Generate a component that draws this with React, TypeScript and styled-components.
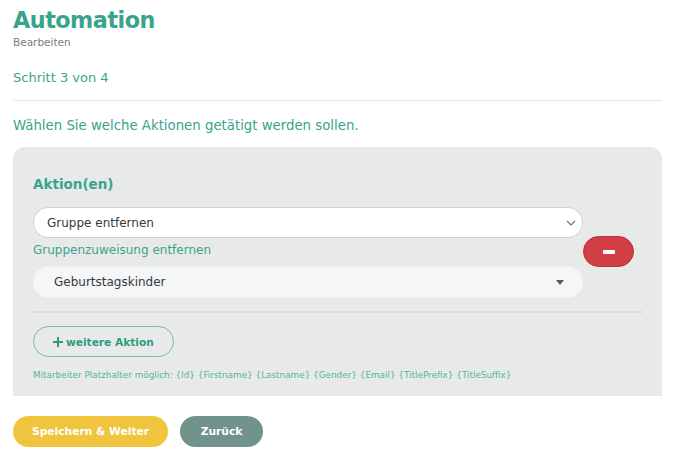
import React from 'react';
import styled, { createGlobalStyle } from 'styled-components';

const GlobalStyle = createGlobalStyle`
  html, body {
    margin: 0;
    padding: 0;
    background: #ffffff;
    font-family: 'DejaVu Sans', 'Open Sans', sans-serif;
  }
  * { box-sizing: border-box; }
`;

const Page = styled.div`
  padding: 5px 18px 12px 13px;
  width: 680px;
`;

const Title = styled.h1`
  margin: 0;
  font-size: 22.3px;
  line-height: 30px;
  font-weight: 700;
  color: #3aa38c;
  letter-spacing: -0.5px;
`;

const Subtitle = styled.div`
  font-size: 10.5px;
  line-height: 14px;
  color: #7a7f7e;
`;

const Step = styled.div`
  margin-top: 20px;
  font-size: 13px;
  line-height: 18px;
  color: #3aa38c;
`;

const Rule = styled.hr`
  margin: 13px 0 0;
  border: none;
  border-top: 1px solid #e4e6e6;
`;

const Lead = styled.p`
  margin: 16px 0 0;
  font-size: 13.3px;
  line-height: 18px;
  color: #3aa38c;
`;

const Panel = styled.section`
  margin-top: 12px;
  background: #e7eae9;
  border-radius: 12px 12px 0 0;
  padding: 28px 19px 15px 20px;
`;

const PanelTitle = styled.h2`
  margin: 0;
  font-size: 13.5px;
  line-height: 18px;
  font-weight: 700;
  color: #3aa38c;
`;

const ActionRow = styled.div`
  margin-top: 14px;
  display: flex;
  align-items: center;
`;

const Fields = styled.div`
  width: 550px;
  display: flex;
  flex-direction: column;
`;

const Select = styled.div<{ $soft?: boolean }>`
  height: ${p => (p.$soft ? 32 : 31)}px;
  border-radius: 15px;
  background: ${p => (p.$soft ? '#f5f6f7' : '#ffffff')};
  border: 1px solid ${p => (p.$soft ? '#f0f1f2' : '#cfd3d4')};
  display: flex;
  align-items: center;
  justify-content: space-between;
  padding: 0 ${p => (p.$soft ? 18 : 6)}px 0 ${p => (p.$soft ? 20 : 13)}px;
  font-size: 12px;
  color: #333a39;
`;

const FieldLabel = styled.div`
  margin: 4px 0 7px;
  font-size: 12px;
  line-height: 17px;
  color: #3aa38c;
`;

const RemoveButton = styled.button`
  width: 51px;
  height: 31px;
  margin-top: -2px;
  border-radius: 16px;
  border: 1px solid #c22f36;
  background: #cf3f45;
  display: flex;
  align-items: center;
  justify-content: center;
  padding: 0;
`;

const Minus = styled.span`
  width: 12px;
  height: 4px;
  border-radius: 1px;
  background: #ffffff;
`;

const Divider = styled.div`
  margin-top: 13px;
  height: 2px;
  background: #d9dddc;
`;

const AddButton = styled.button`
  margin-top: 13px;
  height: 31px;
  padding: 0 19px 0 19px;
  border-radius: 16px;
  border: 1px solid #6fbfaa;
  background: transparent;
  color: #2f9a82;
  font-family: inherit;
  font-size: 10.6px;
  font-weight: 700;
  display: flex;
  align-items: center;
  gap: 3px;
`;

const Hint = styled.div`
  margin-top: 12px;
  font-size: 8.85px;
  line-height: 12px;
  color: #58b49d;
`;

const Footer = styled.div`
  margin-top: 20px;
  display: flex;
  gap: 12px;
`;

const PillButton = styled.button<{ $bg: string; $w: number }>`
  width: ${p => p.$w}px;
  height: 31px;
  border-radius: 16px;
  border: none;
  background: ${p => p.$bg};
  color: #ffffff;
  font-family: inherit;
  font-size: 10.7px;
  font-weight: 700;
`;

const Chevron = () => (
  <svg width="10" height="6" viewBox="0 0 10 6">
    <path d="M1 1l4 4 4-4" fill="none" stroke="#6a6f70" strokeWidth="1.1" />
  </svg>
);

const Caret = () => (
  <svg width="8" height="5" viewBox="0 0 8 5">
    <path d="M0 0h8L4 5z" fill="#555a5b" />
  </svg>
);

const Plus = () => (
  <svg width="10" height="10" viewBox="0 0 10 10">
    <path d="M5 0v10M0 5h10" stroke="#2f9a82" strokeWidth="2" />
  </svg>
);

export default function App() {
  return (
    <>
      <GlobalStyle />
      <Page>
        <Title>Automation</Title>
        <Subtitle>Bearbeiten</Subtitle>
        <Step>Schritt 3 von 4</Step>
        <Rule />
        <Lead>Wählen Sie welche Aktionen getätigt werden sollen.</Lead>
        <Panel>
          <PanelTitle>Aktion(en)</PanelTitle>
          <ActionRow>
            <Fields>
              <Select>
                <span>Gruppe entfernen</span>
                <Chevron />
              </Select>
              <FieldLabel>Gruppenzuweisung entfernen</FieldLabel>
              <Select $soft>
                <span>Geburtstagskinder</span>
                <Caret />
              </Select>
            </Fields>
            <RemoveButton aria-label="Aktion entfernen">
              <Minus />
            </RemoveButton>
          </ActionRow>
          <Divider />
          <AddButton>
            <Plus />
            weitere Aktion
          </AddButton>
          <Hint>
            Mitarbeiter Platzhalter möglich: {'{Id}'} {'{Firstname}'} {'{Lastname}'} {'{Gender}'} {'{Email}'}{' '}
            {'{TitlePrefix}'} {'{TitleSuffix}'}
          </Hint>
        </Panel>
        <Footer>
          <PillButton $bg="#f0c53d" $w={155}>Speichern &amp; Weiter</PillButton>
          <PillButton $bg="#72938c" $w={83}>Zurück</PillButton>
        </Footer>
      </Page>
    </>
  );
}
